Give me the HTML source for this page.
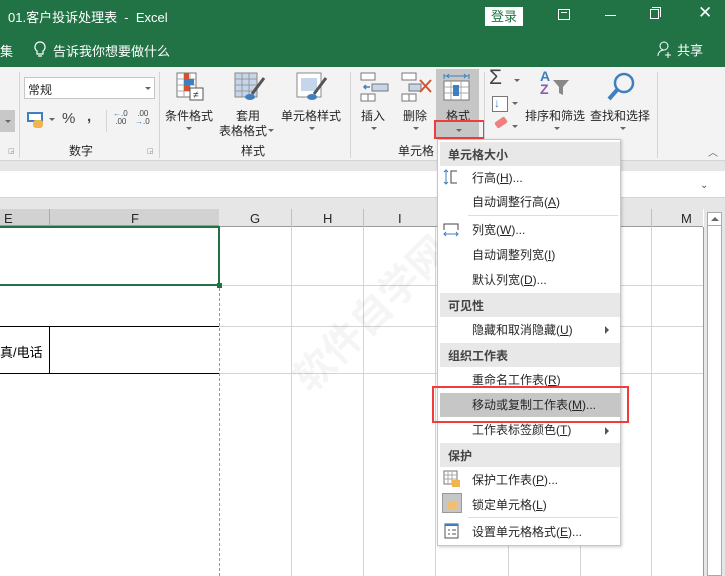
<!DOCTYPE html>
<html><head><meta charset="utf-8"><style>
*{margin:0;padding:0;box-sizing:border-box}
body{width:725px;height:576px;overflow:hidden;position:relative;background:#fff;font-family:"Liberation Sans","Microsoft YaHei","Noto Sans CJK SC",sans-serif;font-size:12px;color:#262626}
.a{position:absolute}
.t{position:absolute;white-space:nowrap}
.g{background:#217346}
.w{color:#fff}
.sep{position:absolute;width:1px;background:#d4d4d4}
.vl{position:absolute;width:1px;background:#d4d4d4;top:227px;height:349px}
.hl{position:absolute;height:1px;background:#d4d4d4}
.menu .it{position:absolute;left:34px;font-size:12px;color:#262626;margin-top:-2px}
.menu .hd{position:absolute;left:2px;width:180px;height:24px;background:#e8e8e8;font-weight:bold;font-size:12px;color:#444;padding:4px 0 0 8px}
.dd{position:absolute;width:0;height:0;border-left:3px solid transparent;border-right:3px solid transparent;border-top:3px solid #666}
</style></head><body>
<!-- title bar -->
<div class="a g" style="left:0;top:0;width:725px;height:67px"></div>
<div class="t w" style="left:8px;top:7px;font-size:13px">01.客户投诉处理表 &nbsp;- &nbsp;Excel</div>
<div class="a" style="left:485px;top:7px;width:38px;height:19px;background:#fff;color:#217346;font-size:13px;text-align:center;line-height:19px">登录</div>
<div class="a" style="left:558px;top:9px;width:12px;height:11px;border:1px solid #fff"></div>
<div class="a" style="left:561px;top:12px;width:6px;height:1px;background:#fff"></div>
<div class="a" style="left:605px;top:15px;width:11px;height:1px;background:#fff"></div>
<div class="a" style="left:650px;top:9px;width:9px;height:10px;border:1px solid #fff"></div>
<div class="a" style="left:652px;top:7px;width:9px;height:10px;border-top:1px solid #fff;border-right:1px solid #fff"></div>
<div class="t w" style="left:698px;top:3px;font-size:17px">✕</div>
<div class="t w" style="left:0;top:41px;font-size:13px">集</div>
<svg class="a" style="left:34px;top:41px" width="12" height="17"><path d="M6 1a5 5 0 0 0-3 9v3h6v-3a5 5 0 0 0-3-9zM4 15h4" fill="none" stroke="#fff" stroke-width="1.2"/></svg>
<div class="t w" style="left:53px;top:41px;font-size:13px">告诉我你想要做什么</div>
<svg class="a" style="left:657px;top:41px" width="16" height="17"><circle cx="7" cy="5" r="4" fill="none" stroke="#fff"/><path d="M1 15c0-4 3-6 6-6M11 11v6M8 14h6" fill="none" stroke="#fff"/></svg>
<div class="t w" style="left:677px;top:40px;font-size:13px">共享</div>
<!-- ribbon -->
<div class="a" style="left:0;top:67px;width:725px;height:93px;background:#f3f3f3"></div>
<div class="a" style="left:0;top:160px;width:725px;height:11px;background:#e6e6e6;border-top:1px solid #d4d4d4"></div>
<div class="a" style="left:0;top:171px;width:725px;height:27px;background:#fff;border-bottom:1px solid #d4d4d4"></div>
<div class="a" style="left:0;top:198px;width:725px;height:11px;background:#e6e6e6"></div>
<div class="a" style="left:700px;top:180px;font-size:10px;color:#555">⌄</div>
<div class="a" style="left:0;top:110px;width:15px;height:22px;background:#c8c8c8"></div>
<div class="dd" style="left:5px;top:120px"></div>
<div class="sep" style="left:19px;top:72px;height:86px"></div>
<div class="a" style="left:24px;top:77px;width:131px;height:22px;background:#fff;border:1px solid #c6c6c6"></div>
<div class="t" style="left:28px;top:81px">常规</div>
<div class="dd" style="left:145px;top:87px"></div>
<div class="a" style="left:27px;top:112px;width:16px;height:10px;border:2px solid #3f7fbf;background:#fff"></div>
<div class="a" style="left:33px;top:120px;width:10px;height:8px;background:#f0b54e;border-radius:3px"></div>
<div class="dd" style="left:49px;top:118px"></div>
<div class="t" style="left:62px;top:110px;font-size:15px;color:#444">%</div>
<div class="t" style="left:87px;top:108px;font-size:15px;font-weight:bold;color:#444">,</div>
<div class="sep" style="left:106px;top:110px;height:22px"></div>
<div class="t" style="left:113px;top:110px;font-size:8px;line-height:8px;color:#444"><span style="color:#3f7fbf">←</span>.0<br>&nbsp;.00</div>
<div class="t" style="left:135px;top:110px;font-size:8px;line-height:8px;color:#444">&nbsp;.00<br><span style="color:#3f7fbf">→</span>.0</div>
<div class="t" style="left:69px;top:142px;font-size:12px">数字</div>
<div class="t" style="left:8px;top:147px;font-size:7px;color:#888">◲</div>
<div class="t" style="left:147px;top:147px;font-size:7px;color:#888">◲</div>
<div class="sep" style="left:159px;top:72px;height:86px"></div>
<!-- 样式 group -->
<svg class="a" style="left:176px;top:72px" width="30" height="30"><rect x="1" y="1" width="19" height="24" fill="#fff" stroke="#777"/><path d="M1 7h19M1 13h19M1 19h19M8 1v24M14 1v24" stroke="#aaa"/><rect x="8" y="1" width="5" height="6" fill="#d35230"/><rect x="8" y="7" width="10" height="6" fill="#3f7fbf"/><rect x="8" y="13" width="6" height="6" fill="#d35230"/><rect x="14" y="16" width="13" height="12" fill="#fff" stroke="#555"/><text x="17" y="26" font-size="10" fill="#333">≠</text></svg>
<div class="t" style="left:165px;top:107px">条件格式</div>
<div class="dd" style="left:186px;top:127px"></div>
<svg class="a" style="left:234px;top:72px" width="32" height="30"><rect x="1" y="1" width="22" height="24" fill="#c5d6ea" stroke="#888"/><path d="M1 7h22M1 13h22M1 19h22M8 1v24M15 1v24" stroke="#999"/><path d="M30 6L18 22" stroke="#555" stroke-width="3"/><ellipse cx="16" cy="25" rx="5" ry="3" fill="#3f7fbf"/></svg>
<div class="t" style="left:236px;top:107px">套用</div>
<div class="t" style="left:219px;top:122px">表格格式</div>
<div class="dd" style="left:268px;top:129px"></div>
<svg class="a" style="left:296px;top:72px" width="32" height="30"><rect x="1" y="1" width="24" height="24" fill="#fff" stroke="#888"/><rect x="5" y="6" width="16" height="13" fill="#c5d6ea"/><path d="M30 6L18 22" stroke="#555" stroke-width="3"/><ellipse cx="16" cy="25" rx="5" ry="3" fill="#3f7fbf"/></svg>
<div class="t" style="left:281px;top:107px">单元格样式</div>
<div class="dd" style="left:309px;top:127px"></div>
<div class="t" style="left:241px;top:142px">样式</div>
<div class="sep" style="left:350px;top:72px;height:86px"></div>
<!-- cells group -->
<svg class="a" style="left:360px;top:72px" width="30" height="30"><rect x="1" y="1" width="14" height="7" fill="#fff" stroke="#777"/><rect x="12" y="12" width="16" height="7" fill="#c5d6ea" stroke="#777"/><path d="M10 15H4M6 13l-2 2 2 2" stroke="#3f7fbf" stroke-width="1.5" fill="none"/><rect x="1" y="22" width="14" height="7" fill="#fff" stroke="#777"/><path d="M8 22v7" stroke="#777"/></svg>
<div class="t" style="left:361px;top:107px">插入</div>
<div class="dd" style="left:371px;top:127px"></div>
<svg class="a" style="left:401px;top:72px" width="32" height="30"><rect x="1" y="1" width="14" height="7" fill="#fff" stroke="#777"/><rect x="8" y="12" width="12" height="7" fill="#c5d6ea" stroke="#777"/><path d="M19 8l11 12M30 8L19 20" stroke="#d35230" stroke-width="2"/><rect x="1" y="22" width="14" height="7" fill="#fff" stroke="#777"/><path d="M8 22v7" stroke="#777"/></svg>
<div class="t" style="left:403px;top:107px">删除</div>
<div class="dd" style="left:413px;top:127px"></div>
<div class="a" style="left:436px;top:69px;width:43px;height:68px;background:#c6c6c6"></div>
<svg class="a" style="left:441px;top:72px" width="32" height="30"><path d="M3 4h25M3 2v5M28 2v5M6 4l2-2M6 4l2 2M25 4l-2-2M25 4l-2 2" stroke="#3f7fbf" fill="none"/><rect x="3" y="9" width="25" height="19" fill="#fff" stroke="#777"/><path d="M3 15h25M3 21h25M10 9v19M20 9v19" stroke="#aaa"/><rect x="12" y="13" width="6" height="11" fill="#3f7fbf"/></svg>
<div class="t" style="left:446px;top:107px">格式</div>
<div class="a" style="left:434px;top:120px;width:51px;height:19px;border:2px solid #f03c3c"></div>
<div class="dd" style="left:456px;top:129px"></div>
<div class="t" style="left:398px;top:142px">单元格</div>
<div class="sep" style="left:484px;top:72px;height:86px"></div>
<!-- editing -->
<div class="t" style="left:489px;top:66px;font-size:21px;color:#444">Σ</div>
<div class="dd" style="left:514px;top:79px"></div>
<div class="a" style="left:492px;top:96px;width:16px;height:16px;border:1px solid #777;background:#fff"></div>
<div class="t" style="left:494px;top:96px;color:#3f7fbf;font-weight:bold">↓</div>
<div class="dd" style="left:512px;top:102px"></div>
<div class="a" style="left:495px;top:119px;width:12px;height:7px;background:#f08080;transform:rotate(-35deg);border-radius:2px"></div>
<div class="dd" style="left:512px;top:125px"></div>
<div class="t" style="left:540px;top:70px;font-size:14px;font-weight:bold;color:#3f7fbf;line-height:13px">A<br><span style="color:#8e5bb0">Z</span></div>
<svg class="a" style="left:552px;top:79px" width="18" height="18"><path d="M1 1h16l-6 7v8l-4-2V8z" fill="#888"/></svg>
<div class="t" style="left:525px;top:107px">排序和筛选</div>
<div class="dd" style="left:554px;top:127px"></div>
<svg class="a" style="left:606px;top:72px" width="30" height="30"><circle cx="18" cy="11" r="9" fill="none" stroke="#3f7fbf" stroke-width="2.5"/><path d="M11 18L3 27" stroke="#3f7fbf" stroke-width="4"/></svg>
<div class="t" style="left:590px;top:107px">查找和选择</div>
<div class="dd" style="left:620px;top:127px"></div>
<div class="sep" style="left:657px;top:72px;height:86px"></div>
<div class="t" style="left:708px;top:144px;font-size:10px;color:#666">︿</div>
<!-- column header -->
<div class="a" style="left:0;top:209px;width:703px;height:18px;background:#e6e6e6;border-bottom:1px solid #9b9b9b"></div>
<div class="a" style="left:0;top:209px;width:219px;height:18px;background:#d2d2d2;border-bottom:2px solid #9b9b9b"></div>
<div class="a" style="left:49px;top:209px;width:1px;height:18px;background:#aaa"></div>
<div class="a" style="left:291px;top:209px;width:1px;height:18px;background:#c0c0c0"></div>
<div class="a" style="left:363px;top:209px;width:1px;height:18px;background:#c0c0c0"></div>
<div class="a" style="left:651px;top:209px;width:1px;height:18px;background:#c0c0c0"></div>
<div class="t" style="left:4px;top:211px;font-size:13px">E</div>
<div class="t" style="left:131px;top:211px;font-size:13px">F</div>
<div class="t" style="left:250px;top:211px;font-size:13px">G</div>
<div class="t" style="left:323px;top:211px;font-size:13px">H</div>
<div class="t" style="left:398px;top:211px;font-size:13px">I</div>
<div class="t" style="left:681px;top:211px;font-size:13px">M</div>
<!-- grid -->
<div class="vl" style="left:291px"></div>
<div class="vl" style="left:363px"></div>
<div class="vl" style="left:435px"></div>
<div class="vl" style="left:508px"></div>
<div class="vl" style="left:580px"></div>
<div class="vl" style="left:651px"></div>
<div class="hl" style="left:219px;top:285px;width:484px"></div>
<div class="hl" style="left:219px;top:326px;width:484px"></div>
<div class="hl" style="left:219px;top:373px;width:484px"></div>
<div class="a" style="left:0;top:226px;width:220px;height:60px;border:2px solid #217346;border-left:none"></div>
<div class="a" style="left:217px;top:283px;width:5px;height:5px;background:#217346"></div>
<div class="a" style="left:0;top:326px;width:219px;height:48px;border-top:1px solid #000;border-bottom:1px solid #000"></div>
<div class="a" style="left:49px;top:326px;width:1px;height:48px;background:#000"></div>
<div class="t" style="left:0;top:342px;font-size:13px;color:#000">真/电话</div>
<div class="a" style="left:219px;top:288px;width:0;height:288px;border-left:1px dashed #999"></div>
<div class="a" style="left:703px;top:227px;width:1px;height:349px;background:#999"></div>
<!-- watermark -->
<div class="t" style="left:278px;top:362px;font-size:40px;color:rgba(0,0,0,0.04);transform:rotate(-45deg);transform-origin:left top;font-weight:bold">软件自学网</div>
<!-- scrollbar -->
<div class="a" style="left:704px;top:209px;width:21px;height:367px;background:#e6e6e6"></div>
<div class="a" style="left:707px;top:212px;width:15px;height:364px;background:#fff;border:1px solid #aaa"></div>
<div class="a" style="left:707px;top:212px;width:15px;height:14px;border:1px solid #aaa;background:#fff"></div>
<div class="a" style="left:711px;top:217px;width:0;height:0;border-left:4px solid transparent;border-right:4px solid transparent;border-bottom:4px solid #666"></div>
<!-- menu -->
<div class="a menu" style="left:437px;top:139px;width:184px;height:407px;background:#fff;border:1px solid #c6c6c6;box-shadow:1px 1px 3px rgba(0,0,0,.2)">
<div class="hd" style="top:2px">单元格大小</div>
<svg class="a" style="left:5px;top:29px" width="16" height="16"><path d="M3 1v14M1 3l2-2 2 2M1 13l2 2 2-2" stroke="#3f7fbf" fill="none"/><path d="M14 2H8v12h6" stroke="#444" fill="none"/></svg>
<div class="it" style="top:31px">行高(<u>H</u>)...</div>
<div class="it" style="top:55px">自动调整行高(<u>A</u>)</div>
<div class="a" style="left:30px;top:75px;width:150px;height:1px;background:#ddd"></div>
<svg class="a" style="left:5px;top:82px" width="16" height="16"><path d="M1 8V2h14v6" stroke="#444" fill="none"/><path d="M1 12h14M3 10l-2 2 2 2M13 10l2 2-2 2" stroke="#3f7fbf" fill="none"/></svg>
<div class="it" style="top:83px">列宽(<u>W</u>)...</div>
<div class="it" style="top:108px">自动调整列宽(<u>I</u>)</div>
<div class="it" style="top:133px">默认列宽(<u>D</u>)...</div>
<div class="hd" style="top:153px">可见性</div>
<div class="it" style="top:183px">隐藏和取消隐藏(<u>U</u>)</div>
<div class="a" style="left:167px;top:186px;border-top:4px solid transparent;border-bottom:4px solid transparent;border-left:4px solid #555"></div>
<div class="hd" style="top:203px">组织工作表</div>
<div class="it" style="top:233px">重命名工作表(<u>R</u>)</div>
<div class="a" style="left:2px;top:253px;width:180px;height:24px;background:#c6c6c6"></div>
<div class="it" style="top:258px">移动或复制工作表(<u>M</u>)...</div>
<div class="it" style="top:283px">工作表标签颜色(<u>T</u>)</div>
<div class="a" style="left:167px;top:287px;border-top:4px solid transparent;border-bottom:4px solid transparent;border-left:4px solid #555"></div>
<div class="hd" style="top:303px">保护</div>
<svg class="a" style="left:5px;top:330px" width="18" height="18"><rect x="1" y="1" width="13" height="13" fill="none" stroke="#777"/><path d="M1 5h13M1 9h13M5 1v13M9 1v13" stroke="#aaa"/><rect x="9" y="10" width="8" height="7" fill="#f0b54e"/></svg>
<div class="it" style="top:333px">保护工作表(<u>P</u>)...</div>
<div class="a" style="left:4px;top:353px;width:20px;height:20px;background:#c6c6c6;border:1px solid #999"></div>
<div class="a" style="left:9px;top:361px;width:10px;height:8px;background:#f0c070"></div>
<div class="it" style="top:358px">锁定单元格(<u>L</u>)</div>
<div class="a" style="left:30px;top:377px;width:150px;height:1px;background:#ddd"></div>
<svg class="a" style="left:6px;top:383px" width="16" height="16"><rect x="1" y="1" width="13" height="14" fill="#fff" stroke="#555"/><rect x="1" y="1" width="13" height="2" fill="#3f7fbf"/><path d="M4 7h2M8 7h4M4 11h2M8 11h4" stroke="#555"/></svg>
<div class="it" style="top:385px">设置单元格格式(<u>E</u>)...</div>
</div>
<div class="a" style="left:432px;top:386px;width:197px;height:37px;border:2px solid #f03c3c"></div>
</body></html>
